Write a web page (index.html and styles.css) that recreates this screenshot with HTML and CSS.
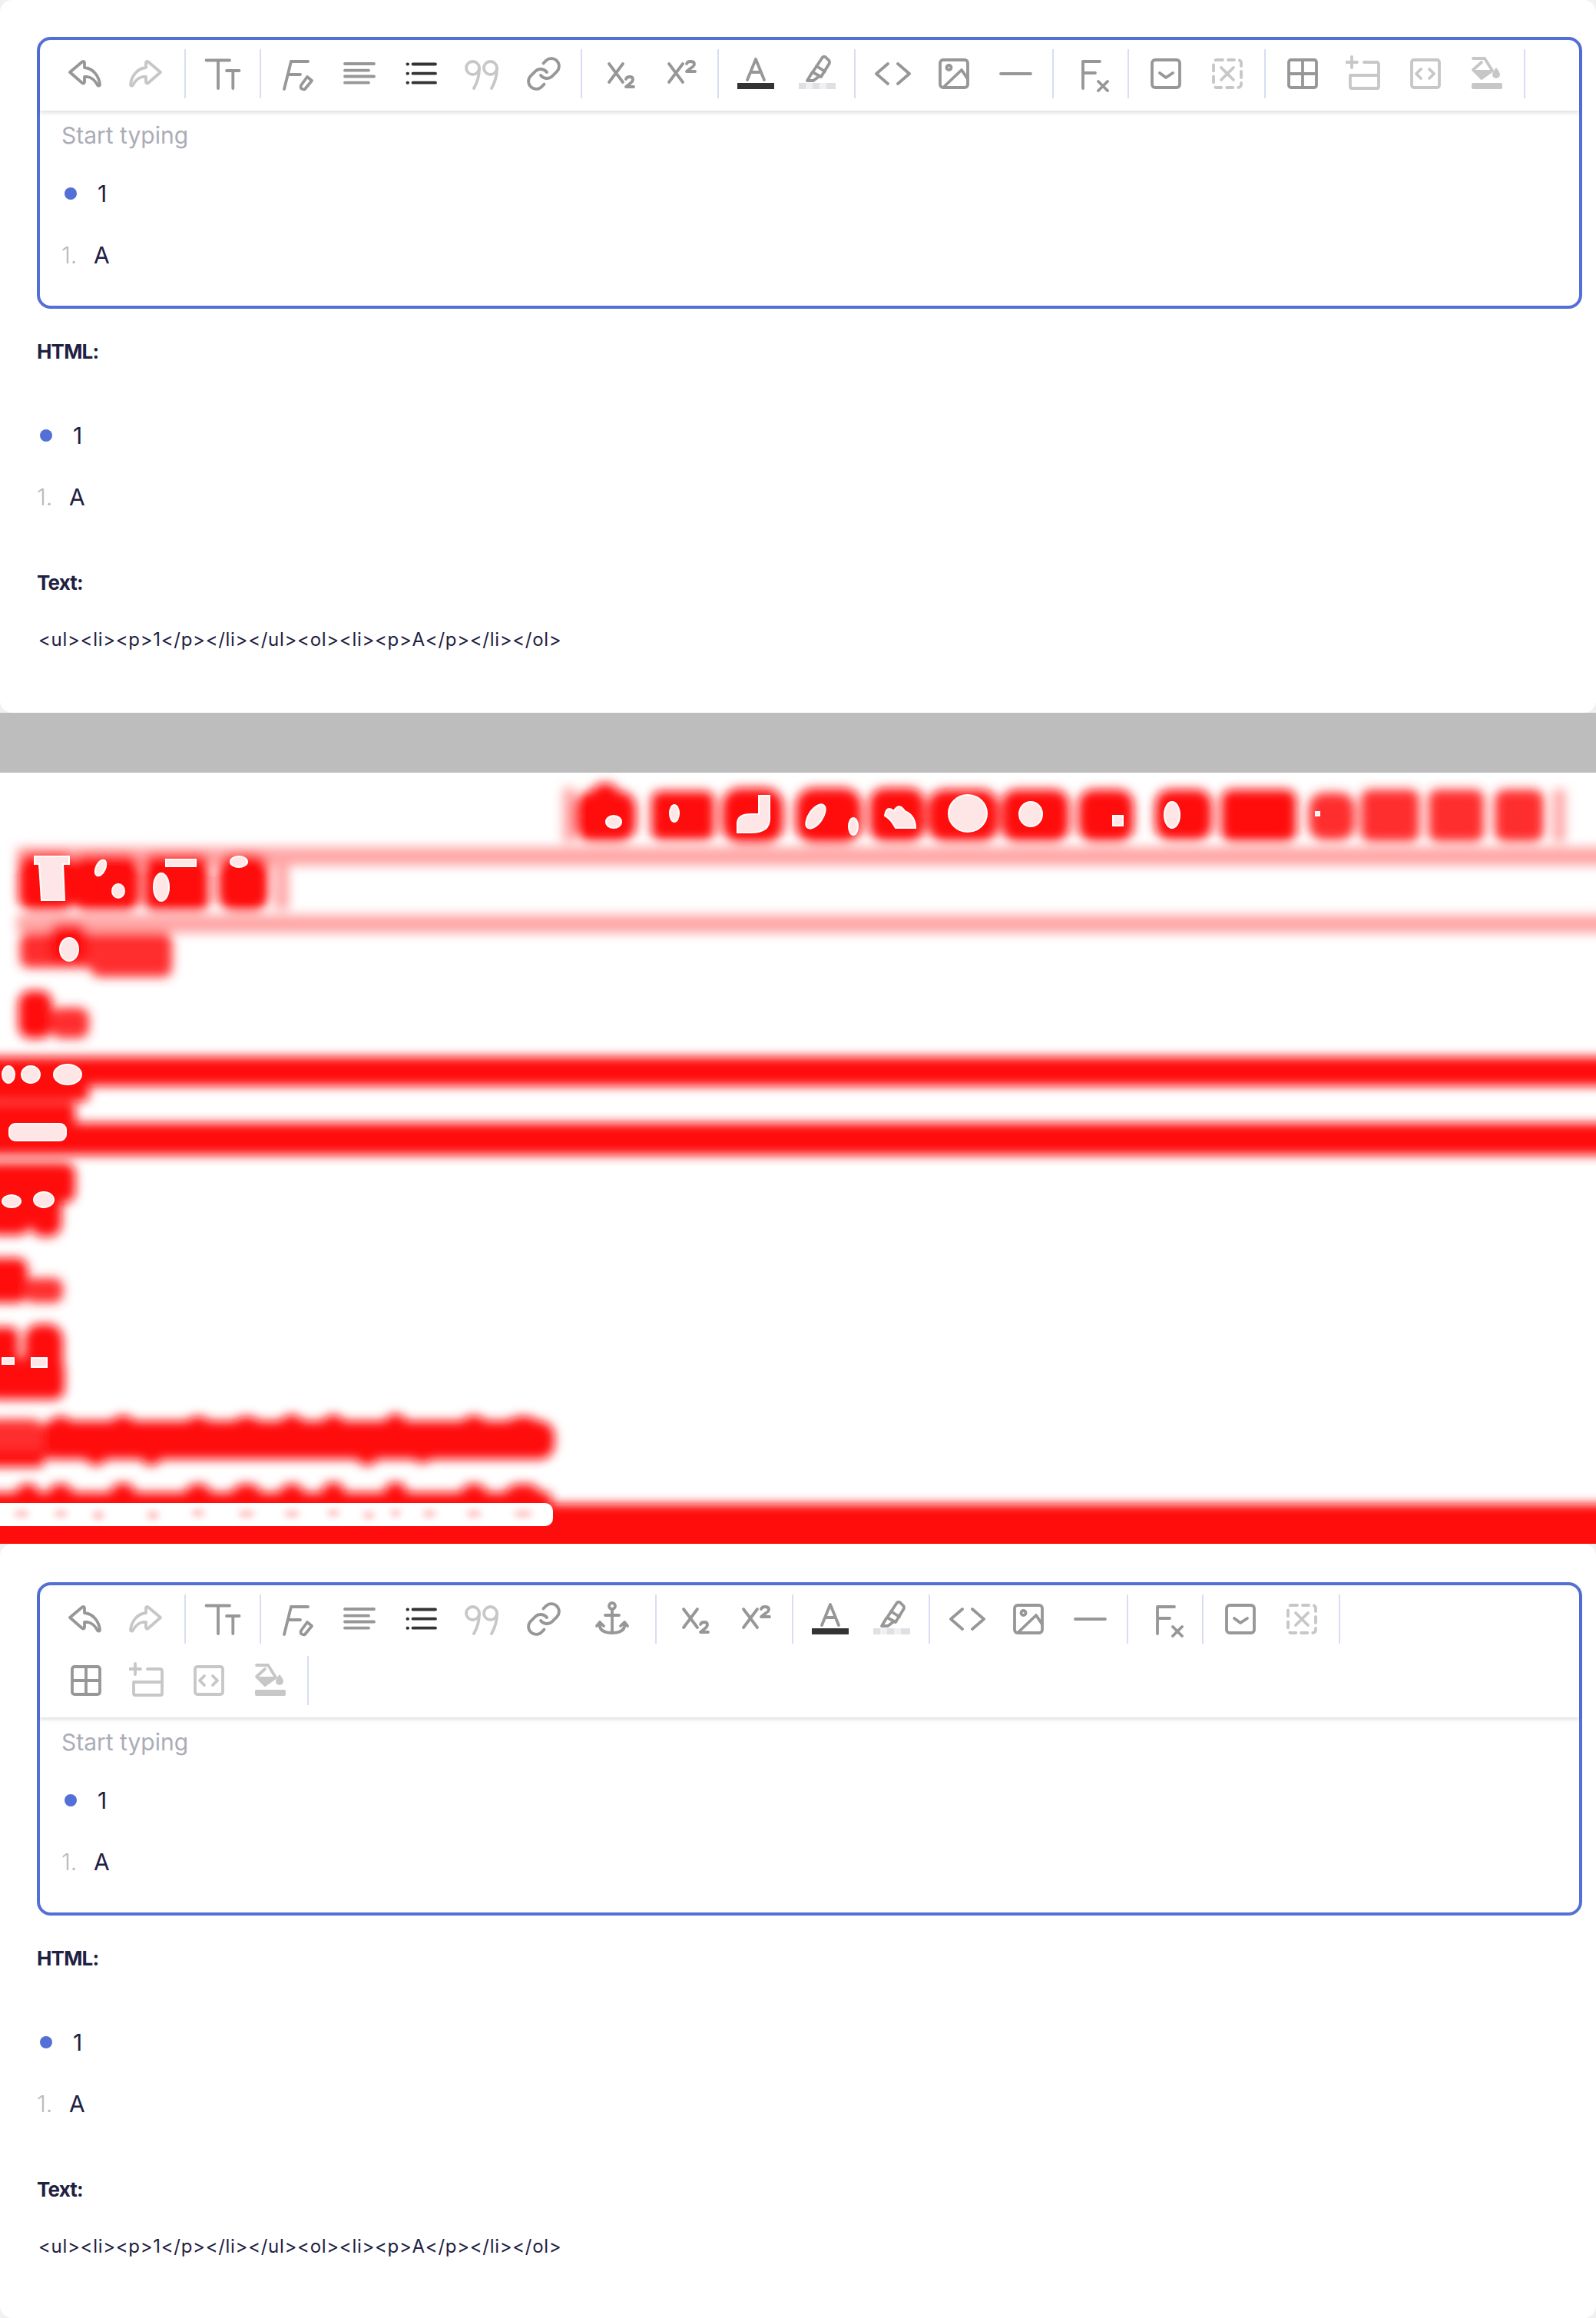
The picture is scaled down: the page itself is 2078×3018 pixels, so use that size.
FILE: index.html
```html
<!DOCTYPE html>
<html lang="en">
<head>
<meta charset="utf-8">
<title>Editor</title>
<link rel="stylesheet" href="styles.css">
</head>
<body>
<svg class="sprite" width="0" height="0" aria-hidden="true">
<defs>
<symbol id="i-undo" viewBox="0 0 48 48"><path d="M3 22 L19 8.500 Q22 7 22 10 V16 C34 17 41 28 42 38 C42 40 40 40 39 39 C36 33 32 29 26 28 H22 V35 Q21 37.500 19 36 Z"/></symbol>
<symbol id="i-tt" viewBox="0 0 48 48"><path d="M2.500 6.500 H33 M18 6.500 V43 M29 20 H45.500 M37.300 20 V43"/></symbol>
<symbol id="i-clear" viewBox="0 0 48 48"><path d="M15 8 H37 M15 8 L6 44 M11 25 H27"/><path d="M36 28 L42 33 L33 44 Q31 45 28 43 Q27 41 28 39 Z"/></symbol>
<symbol id="i-align" viewBox="0 0 48 48"><path d="M5 11 H43 M5 19.700 H36 M5 27.500 H43 M5 35.700 H36"/></symbol>
<symbol id="i-list" viewBox="0 0 48 48"><path d="M13.500 11.500 H43 M13.500 23.700 H43 M13.500 35.700 H43"/><path class="thin" d="M6.500 11.500 H7 M6.500 23.700 H7 M6.500 35.700 H7"/></symbol>
<symbol id="i-quote" viewBox="0 0 48 48"><circle cx="11.500" cy="16.500" r="8.500"/><path d="M20 17 C20 28 17 36 13 43"/><circle cx="34.500" cy="16.500" r="8.500"/><path d="M43 17 C43 28 40 36 36 43"/></symbol>
<symbol id="i-link" viewBox="0 0 48 48"><path d="M20 26a10 10 0 0 0 15.080 1.080l6-6a10 10 0 0 0-14.140-14.140l-3.440 3.420"/><path d="M28 22a10 10 0 0 0-15.080-1.080l-6 6a10 10 0 0 0 14.140 14.140l3.420-3.420"/></symbol>
<symbol id="i-anchor" viewBox="0 0 48 48"><circle cx="24" cy="7" r="4"/><path d="M24 11 V42 M15 19 H33 M8 28 V34 Q10 42 24 42 Q38 42 40 34 V28 M4 33 L8 28 L13 33 M35 33 L40 28 L44 33"/></symbol>
<symbol id="i-sub" viewBox="0 0 48 48"><path d="M11 11 L29 35 M29 11 L11 35"/><path d="M33 31 Q34 28 38 28 Q42 28 42 31.500 Q42 34 38 37 L33 41 H43"/></symbol>
<symbol id="i-sup" viewBox="0 0 48 48"><path d="M9 11 L27 35 M27 11 L9 35"/><path d="M32 11 Q33 8 37 8 Q42 8 42 11.500 Q42 14 37 17 L32 21 H43"/></symbol>
<symbol id="i-color" viewBox="0 0 48 48"><path d="M13 32 L24 5 L35 32 M17 22 H31"/><rect class="solid dark" x="0" y="36" width="48" height="8"/></symbol>
<symbol id="i-mark" viewBox="0 0 48 48"><path d="M18 22 L31 2.500 Q33 1 35 2.500 L39.500 7 Q40.500 9 39.500 11 L29 28 Z M23 14 L34 21"/><path d="M17 23 L11 33 H19 L27 27"/><rect class="solid pale" x="0" y="36" width="48" height="8"/><rect class="solid paler" x="9" y="36" width="9" height="8"/><rect class="solid paler" x="27" y="36" width="9" height="8"/></symbol>
<symbol id="i-code" viewBox="0 0 48 48"><path d="M18 11 L3 24 L18 37 M31 11 L46 24 L31 37"/></symbol>
<symbol id="i-image" viewBox="0 0 48 48"><rect x="6" y="6" width="36" height="36" rx="4"/><circle cx="17.500" cy="16" r="3"/><path d="M11 41 L34 19 L42 31"/></symbol>
<symbol id="i-hr" viewBox="0 0 48 48"><path d="M5 24 H44"/></symbol>
<symbol id="i-fx" viewBox="0 0 48 48"><path d="M14 8 H36 M14 8 V43 M14 23 H30"/><path d="M34 34 L46 46 M46 34 L34 46"/></symbol>
<symbol id="i-box" viewBox="0 0 48 48"><rect x="6" y="6" width="36" height="36" rx="4"/><path d="M16 23 L24 29 L33 23"/></symbol>
<symbol id="i-xbox" viewBox="0 0 48 48"><rect class="dashed" x="6" y="6" width="36" height="36" rx="4"/><path d="M16 16 L32 32 M32 16 L16 32"/></symbol>
<symbol id="i-table" viewBox="0 0 48 48"><rect x="6" y="6" width="36" height="36" rx="3"/><path d="M24 6 V42 M6 24 H42"/></symbol>
<symbol id="i-table2" viewBox="0 0 48 48"><path d="M8 2 V16 M1 9 H15 M24 9 H40 Q43 9 43 12 V41 Q43 43 41 43 H8 Q6 43 6 41 V26 H43"/></symbol>
<symbol id="i-embed" viewBox="0 0 48 48"><rect x="6" y="6" width="36" height="36" rx="3"/><path d="M18 18 L12 24 L18 30 M29 18 L35 24 L29 30"/></symbol>
<symbol id="i-paint" viewBox="0 0 48 48"><path d="M6 4 H21 L31 20 L17 30 L6 19 L17 9"/><path class="solid mid" d="M6 19 H31 L17 30 Z"/><path class="solid mid" d="M36 16 Q41 22 41 25 A5 5 0 0 1 31 25 Q31 22 36 16 Z"/><rect class="solid mid" x="4" y="36" width="40" height="8" rx="2"/></symbol>
</defs>
</svg>

<div class="sheet">
  <section class="card">
    <div class="editor">
      <div class="toolbar">
        <div class="group">
          <button class="btn"><svg class="ico"><use href="#i-undo"/></svg></button>
          <button class="btn off"><svg class="ico flip"><use href="#i-undo"/></svg></button>
        </div>
        <div class="group"><button class="btn"><svg class="ico"><use href="#i-tt"/></svg></button></div>
        <div class="group">
          <button class="btn"><svg class="ico"><use href="#i-clear"/></svg></button>
          <button class="btn"><svg class="ico"><use href="#i-align"/></svg></button>
          <button class="btn on"><svg class="ico"><use href="#i-list"/></svg></button>
          <button class="btn off"><svg class="ico"><use href="#i-quote"/></svg></button>
          <button class="btn"><svg class="ico"><use href="#i-link"/></svg></button>
        </div>
        <div class="group">
          <button class="btn"><svg class="ico"><use href="#i-sub"/></svg></button>
          <button class="btn"><svg class="ico"><use href="#i-sup"/></svg></button>
        </div>
        <div class="group">
          <button class="btn"><svg class="ico"><use href="#i-color"/></svg></button>
          <button class="btn"><svg class="ico"><use href="#i-mark"/></svg></button>
        </div>
        <div class="group">
          <button class="btn"><svg class="ico"><use href="#i-code"/></svg></button>
          <button class="btn"><svg class="ico"><use href="#i-image"/></svg></button>
          <button class="btn"><svg class="ico"><use href="#i-hr"/></svg></button>
        </div>
        <div class="group"><button class="btn"><svg class="ico"><use href="#i-fx"/></svg></button></div>
        <div class="group">
          <button class="btn"><svg class="ico"><use href="#i-box"/></svg></button>
          <button class="btn off"><svg class="ico"><use href="#i-xbox"/></svg></button>
        </div>
        <div class="group">
          <button class="btn"><svg class="ico"><use href="#i-table"/></svg></button>
          <button class="btn off"><svg class="ico"><use href="#i-table2"/></svg></button>
          <button class="btn off"><svg class="ico"><use href="#i-embed"/></svg></button>
          <button class="btn off"><svg class="ico"><use href="#i-paint"/></svg></button>
        </div>
      </div>
      <div class="body">
        <p class="placeholder">Start typing</p>
        <ul class="bullets"><li>1</li></ul>
        <ol class="numbers"><li>A</li></ol>
      </div>
    </div>
    <h3 class="label">HTML:</h3>
    <div class="render">
      <ul class="bullets"><li>1</li></ul>
      <ol class="numbers"><li>A</li></ol>
    </div>
    <h3 class="label text-label">Text:</h3>
    <p class="code">&lt;ul&gt;&lt;li&gt;&lt;p&gt;1&lt;/p&gt;&lt;/li&gt;&lt;/ul&gt;&lt;ol&gt;&lt;li&gt;&lt;p&gt;A&lt;/p&gt;&lt;/li&gt;&lt;/ol&gt;</p>
  </section>

  <div class="band"></div>

  <svg class="diff" viewBox="0 1006 2078 1004" width="2078" height="1004" aria-hidden="true">
    <defs>
      <filter id="soft" x="-5%" y="-5%" width="110%" height="110%"><feGaussianBlur stdDeviation="7"/></filter>
      <filter id="softer" x="-5%" y="-50%" width="110%" height="200%"><feGaussianBlur stdDeviation="4"/></filter>
    </defs>
    <g filter="url(#soft)">
      <g class="pink">
        <rect x="733" y="1026" width="16" height="70"/>
        <rect x="2022" y="1028" width="16" height="68"/>
        <rect x="358" y="1116" width="18" height="68"/>
        <rect x="22" y="1103" width="2070" height="24"/>
        <rect x="22" y="1191" width="2070" height="24"/>
      </g>
      <g class="red">
        <rect x="748" y="1030" width="80" height="66" rx="22"/>
        <rect x="772" y="1020" width="32" height="40" rx="12"/>
        <rect x="848" y="1030" width="82" height="64" rx="12"/>
        <rect x="940" y="1026" width="80" height="72" rx="24"/>
        <rect x="1036" y="1026" width="86" height="72" rx="24"/>
        <rect x="1132" y="1026" width="72" height="70" rx="20"/>
        <rect x="1208" y="1028" width="92" height="68" rx="22"/>
        <rect x="1304" y="1028" width="88" height="68" rx="20"/>
        <rect x="1404" y="1028" width="72" height="68" rx="20"/>
        <rect x="1504" y="1028" width="74" height="66" rx="20"/>
        <rect x="1590" y="1028" width="98" height="68" rx="14"/>
        <rect class="soft" x="1704" y="1032" width="60" height="62" rx="20"/>
        <rect class="soft" x="1772" y="1028" width="76" height="68" rx="12"/>
        <rect class="soft" x="1860" y="1028" width="72" height="68" rx="12"/>
        <rect class="soft" x="1946" y="1028" width="64" height="68" rx="14"/>
        <rect x="24" y="1110" width="74" height="76" rx="18"/>
        <rect x="94" y="1112" width="88" height="74" rx="18"/>
        <rect x="188" y="1112" width="84" height="74" rx="12"/>
        <rect x="284" y="1112" width="66" height="74" rx="20"/>
        <rect class="soft" x="26" y="1214" width="198" height="46" rx="12"/>
        <rect x="64" y="1202" width="50" height="52" rx="16"/>
        <rect class="soft" x="118" y="1226" width="106" height="46" rx="12"/>
        <rect x="24" y="1290" width="44" height="62" rx="16"/>
        <rect class="soft" x="66" y="1312" width="50" height="40" rx="14"/>
        <rect x="-20" y="1376" width="2120" height="38"/>
        <rect x="-20" y="1410" width="136" height="24" rx="8"/>
        <rect x="-20" y="1436" width="118" height="30" rx="6"/>
        <rect x="-20" y="1462" width="2120" height="42"/>
        <rect x="-20" y="1514" width="118" height="52" rx="14"/>
        <rect x="-20" y="1550" width="60" height="58" rx="16"/>
        <rect x="40" y="1550" width="40" height="60" rx="16"/>
        <rect x="-20" y="1638" width="56" height="58" rx="14"/>
        <rect class="soft" x="32" y="1664" width="50" height="32" rx="12"/>
        <rect x="-20" y="1728" width="44" height="54" rx="10"/>
        <rect x="32" y="1724" width="50" height="64" rx="20"/>
        <rect x="-20" y="1768" width="104" height="54" rx="14"/>
        <rect x="50" y="1850" width="672" height="50" rx="20"/>
        <rect class="soft" x="-20" y="1848" width="76" height="52" rx="14"/>
        <rect x="-20" y="1888" width="78" height="22" rx="8"/>
        <ellipse cx="125" cy="1892" rx="15" ry="16"/>
        <ellipse cx="197" cy="1892" rx="15" ry="16"/>
        <ellipse cx="478" cy="1892" rx="15" ry="16"/>
        <ellipse cx="550" cy="1890" rx="15" ry="15"/>
        <ellipse cx="79" cy="1856" rx="15" ry="12"/>
        <ellipse cx="160" cy="1854" rx="15" ry="11"/>
        <ellipse cx="258" cy="1856" rx="16" ry="12"/>
        <ellipse cx="321" cy="1856" rx="18" ry="12"/>
        <ellipse cx="380" cy="1854" rx="15" ry="12"/>
        <ellipse cx="434" cy="1854" rx="14" ry="12"/>
        <ellipse cx="515" cy="1853" rx="14" ry="12"/>
        <ellipse cx="617" cy="1855" rx="16" ry="12"/>
        <ellipse cx="681" cy="1856" rx="22" ry="12"/>
        <rect x="-20" y="1943" width="738" height="20" rx="6"/>
        <ellipse cx="36" cy="1942" rx="14" ry="10"/>
        <ellipse cx="79" cy="1942" rx="15" ry="10"/>
        <ellipse cx="160" cy="1940" rx="15" ry="9"/>
        <ellipse cx="258" cy="1942" rx="16" ry="10"/>
        <ellipse cx="321" cy="1942" rx="18" ry="10"/>
        <ellipse cx="380" cy="1942" rx="15" ry="10"/>
        <ellipse cx="434" cy="1940" rx="14" ry="10"/>
        <ellipse cx="515" cy="1940" rx="14" ry="10"/>
        <ellipse cx="617" cy="1942" rx="16" ry="10"/>
        <ellipse cx="681" cy="1942" rx="22" ry="10"/>
        <rect x="-20" y="1958" width="2120" height="80"/>
      </g>
    </g>
    <g class="spots">
      <ellipse cx="799" cy="1070" rx="10" ry="8"/>
      <ellipse cx="878" cy="1059" rx="6" ry="11"/>
      <path d="M988 1036 h14 v30 q0 18 -24 18 h-18 v-12 q0 -12 18 -12 h10z"/>
      <ellipse cx="1062" cy="1063" rx="9" ry="18" transform="rotate(35 1062 1063)"/>
      <ellipse cx="1111" cy="1076" rx="6" ry="11"/>
      <path d="M1152 1062 q2 -14 12 -6 q6 -12 14 0 q14 6 14 22 h-26 q-6 -12 -14 -16z"/>
      <ellipse cx="1260" cy="1059" rx="25" ry="24"/>
      <ellipse cx="1342" cy="1060" rx="15" ry="16"/>
      <rect x="1449" y="1062" width="13" height="13"/>
      <ellipse cx="1526" cy="1061" rx="10" ry="17"/>
      <rect x="1713" y="1057" width="5" height="5"/>
      <path d="M45 1115 h45 v10 h-8 l2 47 h-30 l-3 -47 h-6z"/>
      <ellipse cx="131" cy="1130" rx="6" ry="11" transform="rotate(25 131 1130)"/>
      <ellipse cx="154" cy="1160" rx="8" ry="9"/>
      <rect x="216" y="1119" width="39" height="9"/>
      <ellipse cx="210" cy="1155" rx="10" ry="18"/>
      <ellipse cx="311" cy="1122" rx="11" ry="7"/>
      <ellipse cx="90" cy="1236" rx="12" ry="15"/>
      <ellipse cx="11" cy="1399" rx="8" ry="11"/>
      <ellipse cx="40" cy="1399" rx="12" ry="11"/>
      <ellipse cx="88" cy="1399" rx="18" ry="13"/>
      <rect x="12" y="1463" width="74" height="22" rx="8"/>
      <ellipse cx="15" cy="1564" rx="12" ry="8"/>
      <ellipse cx="57" cy="1562" rx="13" ry="10"/>
      <rect x="3" y="1768" width="15" height="8"/>
      <rect x="41" y="1768" width="20" height="12"/>
    </g>
    <rect class="pill" x="-10" y="1957" width="730" height="30" rx="10"/>
    <g class="pill-dots" filter="url(#softer)">
      <ellipse cx="28" cy="1971" rx="10" ry="5"/>
      <ellipse cx="79" cy="1971" rx="9" ry="5"/>
      <ellipse cx="128" cy="1973" rx="8" ry="6"/>
      <ellipse cx="199" cy="1973" rx="8" ry="6"/>
      <ellipse cx="258" cy="1970" rx="9" ry="5"/>
      <ellipse cx="321" cy="1971" rx="11" ry="5"/>
      <ellipse cx="380" cy="1971" rx="10" ry="5"/>
      <ellipse cx="434" cy="1970" rx="8" ry="5"/>
      <ellipse cx="480" cy="1973" rx="8" ry="5"/>
      <ellipse cx="515" cy="1970" rx="7" ry="5"/>
      <ellipse cx="559" cy="1971" rx="9" ry="5"/>
      <ellipse cx="617" cy="1971" rx="10" ry="5"/>
      <ellipse cx="681" cy="1971" rx="12" ry="5"/>
    </g>
  </svg>

  <section class="card">
    <div class="editor">
      <div class="toolbar">
        <div class="group">
          <button class="btn"><svg class="ico"><use href="#i-undo"/></svg></button>
          <button class="btn off"><svg class="ico flip"><use href="#i-undo"/></svg></button>
        </div>
        <div class="group"><button class="btn"><svg class="ico"><use href="#i-tt"/></svg></button></div>
        <div class="group">
          <button class="btn"><svg class="ico"><use href="#i-clear"/></svg></button>
          <button class="btn"><svg class="ico"><use href="#i-align"/></svg></button>
          <button class="btn on"><svg class="ico"><use href="#i-list"/></svg></button>
          <button class="btn off"><svg class="ico"><use href="#i-quote"/></svg></button>
          <button class="btn"><svg class="ico"><use href="#i-link"/></svg></button>
          <button class="btn wide"><svg class="ico"><use href="#i-anchor"/></svg></button>
        </div>
        <div class="group">
          <button class="btn"><svg class="ico"><use href="#i-sub"/></svg></button>
          <button class="btn"><svg class="ico"><use href="#i-sup"/></svg></button>
        </div>
        <div class="group">
          <button class="btn"><svg class="ico"><use href="#i-color"/></svg></button>
          <button class="btn"><svg class="ico"><use href="#i-mark"/></svg></button>
        </div>
        <div class="group">
          <button class="btn"><svg class="ico"><use href="#i-code"/></svg></button>
          <button class="btn"><svg class="ico"><use href="#i-image"/></svg></button>
          <button class="btn"><svg class="ico"><use href="#i-hr"/></svg></button>
        </div>
        <div class="group"><button class="btn"><svg class="ico"><use href="#i-fx"/></svg></button></div>
        <div class="group">
          <button class="btn"><svg class="ico"><use href="#i-box"/></svg></button>
          <button class="btn off"><svg class="ico"><use href="#i-xbox"/></svg></button>
        </div>
        <div class="group">
          <button class="btn"><svg class="ico"><use href="#i-table"/></svg></button>
          <button class="btn off"><svg class="ico"><use href="#i-table2"/></svg></button>
          <button class="btn off"><svg class="ico"><use href="#i-embed"/></svg></button>
          <button class="btn off"><svg class="ico"><use href="#i-paint"/></svg></button>
        </div>
      </div>
      <div class="body">
        <p class="placeholder">Start typing</p>
        <ul class="bullets"><li>1</li></ul>
        <ol class="numbers"><li>A</li></ol>
      </div>
    </div>
    <h3 class="label">HTML:</h3>
    <div class="render">
      <ul class="bullets"><li>1</li></ul>
      <ol class="numbers"><li>A</li></ol>
    </div>
    <h3 class="label text-label">Text:</h3>
    <p class="code">&lt;ul&gt;&lt;li&gt;&lt;p&gt;1&lt;/p&gt;&lt;/li&gt;&lt;/ul&gt;&lt;ol&gt;&lt;li&gt;&lt;p&gt;A&lt;/p&gt;&lt;/li&gt;&lt;/ol&gt;</p>
  </section>
</div>
</body>
</html>
```

FILE: styles.css
```css
* { box-sizing: border-box; }
html, body { margin: 0; padding: 0; background: #fff; }
body { font-family: Inter, "Liberation Sans", sans-serif; color: #1e2142; }
.sprite { position: absolute; }
.sheet { width: 2078px; background: #f1f1f1; }

.card {
  background: #fff;
  border-radius: 16px;
  height: 928px;
  padding: 48px 18px 0 48px;
}
.card:last-child { height: 1008px; padding-top: 50px; }
.band { height: 78px; background: #bdbdbd; }
.diff { display: block; background: #fff; }
.pink { fill: #ffa6a6; }
.red { fill: #ff0a0a; }
.red .soft { fill: #ff2e2e; }
.spots { fill: #ffe6e6; stroke: #fff; stroke-width: 2; }
.pill { fill: #fff; }
.pill-dots { fill: #ffc4c4; }

.editor { border: 4px solid #5470d6; border-radius: 18px; }
.toolbar {
  display: flex;
  flex-wrap: wrap;
  row-gap: 16px;
  padding: 12px 0 16px 20px;
  box-shadow: 0 3px 5px rgba(0, 0, 0, 0.12);
}
.group { display: flex; }
.group::after {
  content: "";
  width: 2px;
  height: 64px;
  margin: 0 8px;
  background: #d9ddf3;
}
.btn {
  display: flex;
  align-items: center;
  justify-content: center;
  width: 80px;
  height: 64px;
  padding: 0;
  border: 0;
  background: none;
  color: #979797;
}
.btn.off { color: #c7c7c7; }
.btn.wide { width: 97px; }
.ico {
  width: 48px;
  height: 48px;
  overflow: visible;
  fill: none;
  stroke: currentColor;
  stroke-width: 3.8;
  stroke-linecap: round;
  stroke-linejoin: round;
}
.flip { transform: translateX(-4px) scaleX(-1); }
.btn.on .ico { color: #333; stroke: #333; }
.solid { fill: currentColor; stroke: none; }
.solid.dark { fill: #333; }
.solid.pale { fill: #dee0e4; }
.solid.paler { fill: #eff0f2; }
.solid.mid { fill: #c7c7c7; }
.dashed { stroke-dasharray: 8 7; }
.thin { stroke-width: 4; }

.body { padding: 10px 28px 44px; }
.placeholder { margin: 0 0 32px; font-size: 30px; line-height: 44px; color: #acacb8; }
.bullets, .numbers { margin: 0; padding: 0; list-style: none; font-size: 30px; line-height: 44px; }
.bullets { margin-bottom: 36px; }
.bullets li, .numbers li { display: flex; align-items: center; }
.bullets li::before {
  content: "";
  width: 16px;
  height: 16px;
  margin: 0 27px 0 4px;
  border-radius: 50%;
  background: #5470d6;
}
.numbers li::before {
  content: "1.";
  width: 42px;
  color: #b9b9b9;
  font-weight: 300;
}
.label { margin: 34px 0 0; font-size: 26px; line-height: 44px; font-weight: 700; letter-spacing: -0.8px; }
.render { margin-top: 65px; }
.text-label { margin-top: 68px; }
.code { margin: 30px 0 0 2px; font-size: 24px; line-height: 44px; letter-spacing: 0.7px; }
```
